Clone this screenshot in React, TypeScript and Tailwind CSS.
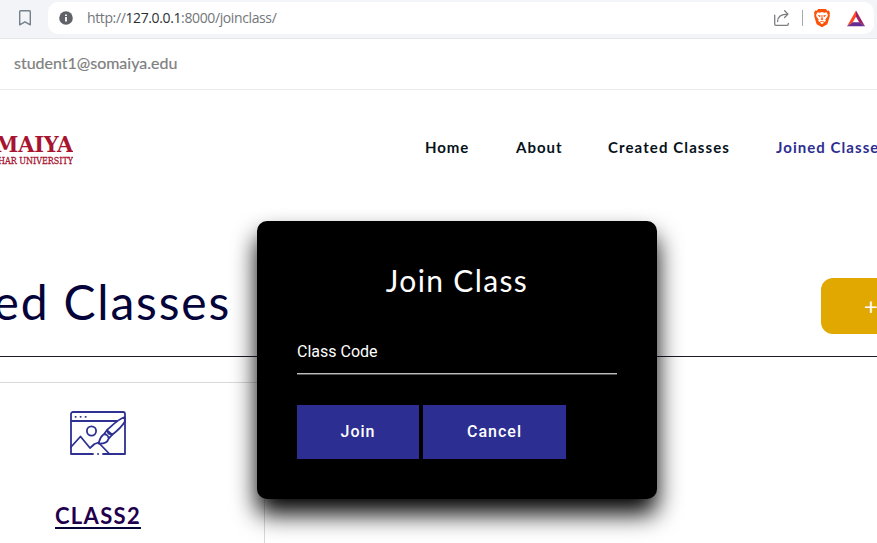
import React from "react";

function BrowserBar() {
  return (
    <div className="flex h-[39px] items-start border-b border-[#e6e7eb] bg-[#f3f4f7] pr-[3px]">
      <svg className="ml-[17px] mt-[9px] h-[18px] w-4 shrink-0" viewBox="0 0 16 18" fill="none" stroke="#74808a" strokeWidth="1.4" strokeLinejoin="round">
        <path d="M3.6 1.7h8.8a.9.9 0 0 1 .9.9v13.2L8 12.8l-5.3 3V2.6a.9.9 0 0 1 .9-.9z" />
      </svg>
      <div className="ml-[15px] mt-[2px] flex h-8 flex-1 items-center rounded-[10px] bg-white pl-[11px] pr-[9px]">
        <svg className="h-[14px] w-[14px]" viewBox="0 0 14 14">
          <circle cx="7" cy="7" r="6.8" fill="#5f6368" />
          <path d="M6.1 6h1.8v4.5H6.1zM6.1 3.4h1.8v1.7H6.1z" fill="#fff" />
        </svg>
        <span className="ml-[14px] whitespace-nowrap font-['Open_Sans',sans-serif] text-[14px] leading-5 tracking-[-0.38px] text-[#73767a]">
          http://<span className="text-[#2c2f33]">127.0.0.1</span>:8000/joinclass/
        </span>
        <svg className="ml-auto h-[18px] w-[18px]" viewBox="0 0 18 18" fill="none" stroke="#7b7d80" strokeWidth="1.3" strokeLinecap="round" strokeLinejoin="round">
          <path d="M1.7 6.2v8.9a1.2 1.2 0 0 0 1.2 1.2h11.2a1.2 1.2 0 0 0 1.2-1.2v-.8" />
          <path d="M4.6 12.6c0-4.9 2.5-7.5 10.2-7.5M11.6 1.8 15 5.1l-3.4 3.4" />
        </svg>
        <div className="ml-[11px] h-4 w-px bg-[#a6a8ab]" />
        <svg className="ml-[11px] h-[18px] w-4" viewBox="0 0 16 18">
          <path d="M4.2 0h7.6l1.5 1.7 1.6-.2L16 4.1l-.5 1.5.4 1.2-2.2 7.4c-.2.7-.7 1.2-1.2 1.6L8.8 17.8a1.4 1.4 0 0 1-1.6 0l-3.7-2c-.5-.4-1-.9-1.2-1.6L.1 6.8l.4-1.2L0 4.1l1.1-2.6 1.6.2z" fill="#fb5208" />
          <path d="m3.4 3.3 2.4.4L8 3.1l2.2.6 2.4-.4 1.3 2.6-.6 2-2 2.6.5 1.5-1.1.9L8 11.7l-2.7 1.2-1.1-.9.5-1.5-2-2.6-.6-2z" fill="#fff" />
          <path d="m3.4 5.8 3.2.8-.5 1.8zM12.6 5.8l-3.2.8.5 1.8zM7.5 6h1v3.2l1 .9L8 11.2l-1.5-1.1 1-.9z" fill="#fb5208" />
          <path d="M8 12.6 10 13.7 8 15.2 6 13.7z" fill="#fff" />
        </svg>
        <svg className="ml-[17px] h-[17px] w-[18px]" viewBox="0 0 18 17">
          <path d="M9 .5 0 16.2 5.8 12.3 9 6.7z" fill="#ff4724" />
          <path d="m9 .5 9 15.7-5.8-3.9L9 6.7z" fill="#9e1f63" />
          <path d="M0 16.2h18l-5.8-3.9H5.8z" fill="#662d91" />
        </svg>
      </div>
    </div>
  );
}

function UniversityLogo() {
  return (
    <div className="mt-[5px] flex h-9 w-[73px] shrink-0 flex-col items-end overflow-hidden whitespace-nowrap font-['DejaVu_Serif',serif] font-bold text-[#a8142f]">
      <span className="origin-right scale-x-[0.97] text-[21.5px] leading-[25px] tracking-[-0.2px]">SOMAIYA</span>
      <span className="origin-right scale-x-[0.89] text-[9px] leading-[8px] font-normal [-webkit-text-stroke:0.3px_#a8142f]">VIDYAVIHAR UNIVERSITY</span>
    </div>
  );
}

function NavBar() {
  return (
    <header className="flex h-[115px] items-center overflow-hidden">
      <UniversityLogo />
      <nav className="-mt-[2px] ml-[352px] flex shrink-0 whitespace-nowrap text-[15px] leading-6 font-bold text-[#06121a]">
        <span className="w-[91px] shrink-0 tracking-[0.9px]">Home</span>
        <span className="w-[92px] shrink-0 tracking-[1px]">About</span>
        <span className="w-[168px] shrink-0 tracking-[1.1px]">Created Classes</span>
        <span className="shrink-0 tracking-[1.05px] text-[#2d2e8f]">Joined Classes</span>
      </nav>
    </header>
  );
}

function DesignIcon() {
  return (
    <svg className="h-11 w-14" viewBox="0 0 56 44" fill="none" stroke="#2e3192" strokeWidth="1.8" strokeLinejoin="round" strokeLinecap="round">
      <path d="M23 43H1V3a2 2 0 0 1 2-2h50a2 2 0 0 1 2 2v40H33" />
      <path d="M1 10h46M5.5 5.8h.3M10.5 5.8h.3M15.5 5.8h.3M28 43h.1" />
      <circle cx="21.5" cy="20" r="4.6" />
      <path d="m1 36 9.5-10.5L20 37l4.5-4 4-1.5 11 11.5" />
      <path d="M28.5 32.5c1-2.5 1.4-6.5 4.7-8.8 2.5-1.4 5.8 1.2 5.3 4.2-1 3.4-5.5 4.8-10 4.6zM33.7 23.5l3.2-4.3 5.3 4.5-3.7 4.1M36.9 19.2C42 14.5 47.5 8.4 54.8 6v4.7c-3 5-7.6 9.1-12.6 13" />
      <path d="m37 19.2 1.5 3.4 3.7 1.1" />
    </svg>
  );
}

function JoinDialog() {
  return (
    <div role="dialog" className="absolute left-[257px] top-[221.4px] flex h-[278px] w-[400px] flex-col rounded-[10px] bg-black px-10 text-white shadow-[0_15px_25px_#000]">
      <h2 className="mt-[39px] text-center text-[30px] leading-10 tracking-[1.35px]">Join Class</h2>
      <label className="mt-[40px] font-[Roboto,sans-serif] text-[16px] leading-6">Class Code</label>
      <div className="mt-[9px] h-[2px] w-full border-b border-[#555] bg-[#bbb]" />
      <div className="mt-[30px] flex gap-1 font-[Roboto,sans-serif] text-[16px] font-medium tracking-[1px]">
        <button className="h-[54px] w-[122px] bg-[#2d2e91]">Join</button>
        <button className="h-[54px] w-[143px] bg-[#2d2e91]">Cancel</button>
      </div>
    </div>
  );
}

export default function App() {
  return (
    <div className="relative h-[543px] w-[877px] overflow-hidden bg-white font-[Lato,sans-serif]">
      <BrowserBar />
      <div className="flex h-[51px] items-center border-b border-[#ececee] pb-[2px] pl-[14px] text-[16px] tracking-[0px] text-[#808080] [-webkit-text-stroke:0.2px_#808080]">
        student1@somaiya.edu
      </div>
      <NavBar />
      <main>
        <section className="flex h-[152px] items-start justify-between border-b border-[#1b1b2a] pt-[73px]">
          <h1 className="-mt-px flex w-[231px] justify-end overflow-hidden whitespace-nowrap text-[48px] leading-[50px] tracking-[1.8px] text-[#04043a]">Joined Classes</h1>
          <button className="h-14 w-14 rounded-l-[12px] bg-[#e0a800] pl-[43px] text-left text-[24px] leading-[52px] text-white">+</button>
        </section>
        <section className="mt-[25px] flex h-[161px] w-[265px] flex-col items-start border-r border-t border-[#d9d9d9] pl-[55px] pt-[28px]">
          <div className="ml-[15px]"><DesignIcon /></div>
          <a className="mt-[48px] whitespace-nowrap text-[22px] leading-[26px] font-bold tracking-[1.3px] text-[#1f004d] underline decoration-[#04043a] decoration-2 underline-offset-[3px]">CLASS2</a>
        </section>
      </main>
      <JoinDialog />
    </div>
  );
}
